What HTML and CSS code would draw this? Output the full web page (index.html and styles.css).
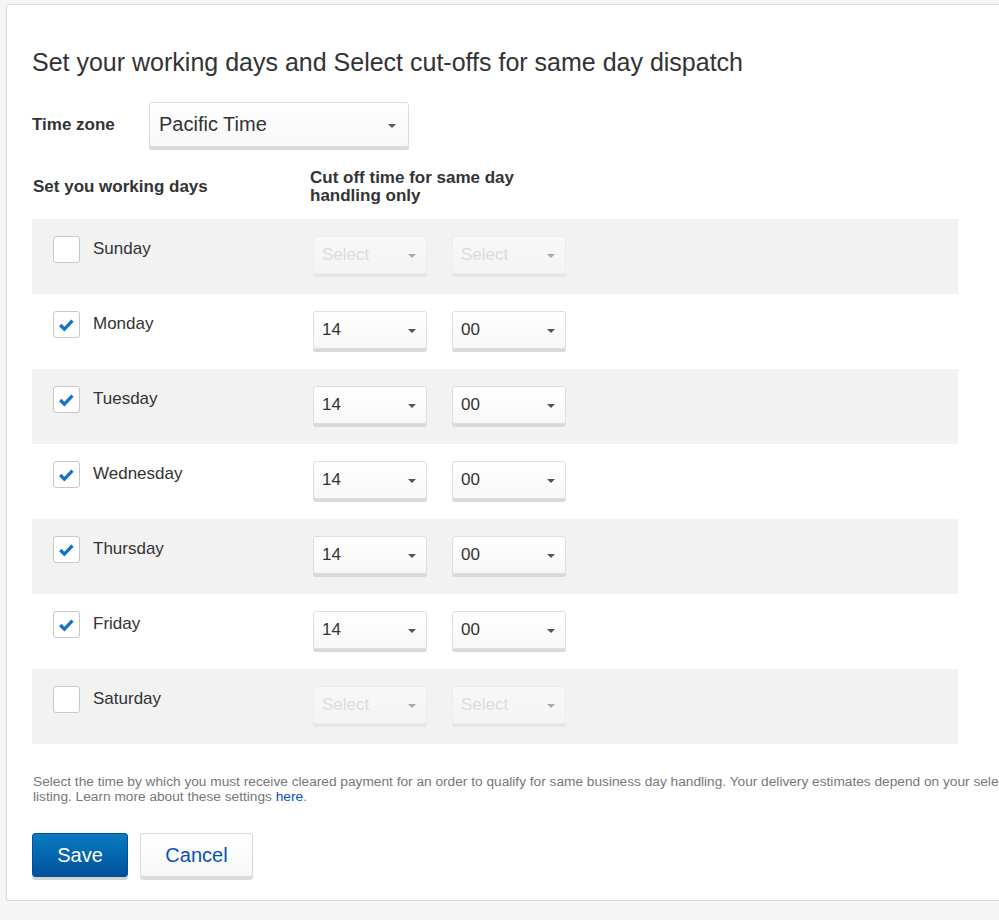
FILE: index.html
```html
<!DOCTYPE html>
<html>
    <head>
        <title>Working days</title>
        <link rel="stylesheet" href="styles.css">
    </head>
    <body>
        <div class="card">
            <h1 class="title">Set your working days and Select cut-offs for same day dispatch</h1>

            <div class="tz-row">
                <label class="tz-label">Time zone</label>
                <div class="dropdown dropdown-tz">Pacific Time<i class="caret"></i></div>
            </div>

            <div class="days-head">
                <div>Set you working days</div>
                <div>Cut off time for same day<br>handling only</div>
            </div>

            <div class="days">
                <div class="day shaded">
                    <div class="day-cell"><span class="check"></span><span class="day-name">Sunday</span></div>
                    <div class="dropdown off">Select<i class="caret"></i></div>
                    <div class="dropdown off">Select<i class="caret"></i></div>
                </div>
                <div class="day">
                    <div class="day-cell"><span class="check on"><svg viewBox="0 0 26 26"><path d="M6.5 13.5l4.3 4.3 8.4-8.8"/></svg></span><span class="day-name">Monday</span></div>
                    <div class="dropdown">14<i class="caret"></i></div>
                    <div class="dropdown">00<i class="caret"></i></div>
                </div>
                <div class="day shaded">
                    <div class="day-cell"><span class="check on"><svg viewBox="0 0 26 26"><path d="M6.5 13.5l4.3 4.3 8.4-8.8"/></svg></span><span class="day-name">Tuesday</span></div>
                    <div class="dropdown">14<i class="caret"></i></div>
                    <div class="dropdown">00<i class="caret"></i></div>
                </div>
                <div class="day">
                    <div class="day-cell"><span class="check on"><svg viewBox="0 0 26 26"><path d="M6.5 13.5l4.3 4.3 8.4-8.8"/></svg></span><span class="day-name">Wednesday</span></div>
                    <div class="dropdown">14<i class="caret"></i></div>
                    <div class="dropdown">00<i class="caret"></i></div>
                </div>
                <div class="day shaded">
                    <div class="day-cell"><span class="check on"><svg viewBox="0 0 26 26"><path d="M6.5 13.5l4.3 4.3 8.4-8.8"/></svg></span><span class="day-name">Thursday</span></div>
                    <div class="dropdown">14<i class="caret"></i></div>
                    <div class="dropdown">00<i class="caret"></i></div>
                </div>
                <div class="day">
                    <div class="day-cell"><span class="check on"><svg viewBox="0 0 26 26"><path d="M6.5 13.5l4.3 4.3 8.4-8.8"/></svg></span><span class="day-name">Friday</span></div>
                    <div class="dropdown">14<i class="caret"></i></div>
                    <div class="dropdown">00<i class="caret"></i></div>
                </div>
                <div class="day shaded">
                    <div class="day-cell"><span class="check"></span><span class="day-name">Saturday</span></div>
                    <div class="dropdown off">Select<i class="caret"></i></div>
                    <div class="dropdown off">Select<i class="caret"></i></div>
                </div>
            </div>

            <p class="note">Select the time by which you must receive cleared payment for an order to qualify for same business day handling. Your delivery estimates depend on your selected handling time and the shipping services offered in your<br>listing. Learn more about these settings <a href="#">here</a>.</p>

            <div class="actions">
                <button type="button" class="btn btn-save">Save</button>
                <button type="button" class="btn btn-cancel">Cancel</button>
            </div>
        </div>
    </body>
</html>
```

FILE: styles.css
```css
html, body {
    margin: 0;
    overflow: hidden;
}
body {
    background-color: #f5f5f5;
    font-family: "Liberation Sans", Arial, sans-serif;
    color: #333;
}
.card {
    width: 1400px;
    margin: 4px 0 0 6px;
    padding: 42px 25px 23px 25px;
    background-color: #fff;
    border: 1px solid #dcdcdc;
    border-radius: 3px;
    box-shadow: 0 1px 2px rgba(0, 0, 0, 0.06);
}
.title {
    margin: 0 0 25px 0;
    font-size: 25px;
    line-height: 30px;
    font-weight: normal;
}

/* time zone picker */
.tz-row {
    display: flex;
    align-items: center;
}
.tz-label {
    width: 117px;
    font-size: 17px;
    font-weight: bold;
}
.dropdown {
    position: relative;
    box-sizing: border-box;
    width: 114px;
    height: 38px;
    padding: 0 8px;
    display: flex;
    align-items: center;
    font-size: 17px;
    color: #333;
    background: linear-gradient(#fff, #f7f7f7);
    border: 1px solid #dedede;
    border-radius: 3px;
    box-shadow: 0 3px 0 #d9d9d9;
}
.dropdown-tz {
    width: 260px;
    height: 45px;
    font-size: 20px;
    padding-left: 9px;
}
.caret {
    position: absolute;
    right: 10px;
    top: 50%;
    margin-top: -1px;
    border-left: 4px solid transparent;
    border-right: 4px solid transparent;
    border-top: 4px solid #555;
}
.dropdown-tz .caret {
    right: 12px;
}
.dropdown.off {
    color: #dcdcdc;
    background: #f5f5f5;
    border-color: #ececec;
    box-shadow: 0 3px 0 #e6e6e6;
}
.day .dropdown.off {
    background: linear-gradient(#f8f8f8, #f4f4f4);
}
.dropdown.off .caret {
    border-top-color: #aaa;
}

/* working days table */
.days-head {
    display: grid;
    grid-template-columns: 277px auto;
    align-items: center;
    margin: 22px 0 14px 1px;
    font-size: 17px;
    line-height: 18px;
    font-weight: bold;
}
.days {
    width: 926px;
}
.day {
    display: flex;
    align-items: flex-start;
    height: 75px;
    box-sizing: border-box;
    padding: 17px 0 0 21px;
}
.day.shaded {
    background-color: #f2f2f2;
}
.day-cell {
    width: 260px;
    display: flex;
    align-items: center;
}
.day-name {
    margin-left: 13px;
    font-size: 17px;
    line-height: 26px;
    margin-top: -2px;
}
.day .dropdown + .dropdown {
    margin-left: 25px;
}
.check {
    box-sizing: border-box;
    width: 27px;
    height: 27px;
    background: #fff;
    border: 1px solid #c8c8c8;
    border-radius: 3px;
}
.check svg {
    display: block;
    width: 25px;
    height: 25px;
}
.check path {
    fill: none;
    stroke: #1173cc;
    stroke-width: 3.4;
}

.note {
    margin: 30px 0 0 1px;
    font-size: 13.7px;
    line-height: 15px;
    color: #777;
    white-space: nowrap;
}
.note a {
    color: #0654ba;
    text-decoration: none;
}

/* buttons */
.actions {
    display: flex;
    gap: 12px;
    margin-top: 29px;
}
.btn {
    height: 44px;
    font-family: "Liberation Sans", Arial, sans-serif;
    font-size: 20px;
    border-radius: 3px;
    cursor: pointer;
}
.btn-save {
    width: 96px;
    color: #fff;
    background: linear-gradient(#0a7bc1, #00529c);
    border: 1px solid #00529c;
    box-shadow: 0 3px 0 #d4d4d4;
}
.btn-cancel {
    width: 113px;
    color: #0654ba;
    background: linear-gradient(#fff, #f7f7f7);
    border: 1px solid #d8d8d8;
    box-shadow: 0 3px 0 #dcdcdc;
}
```
